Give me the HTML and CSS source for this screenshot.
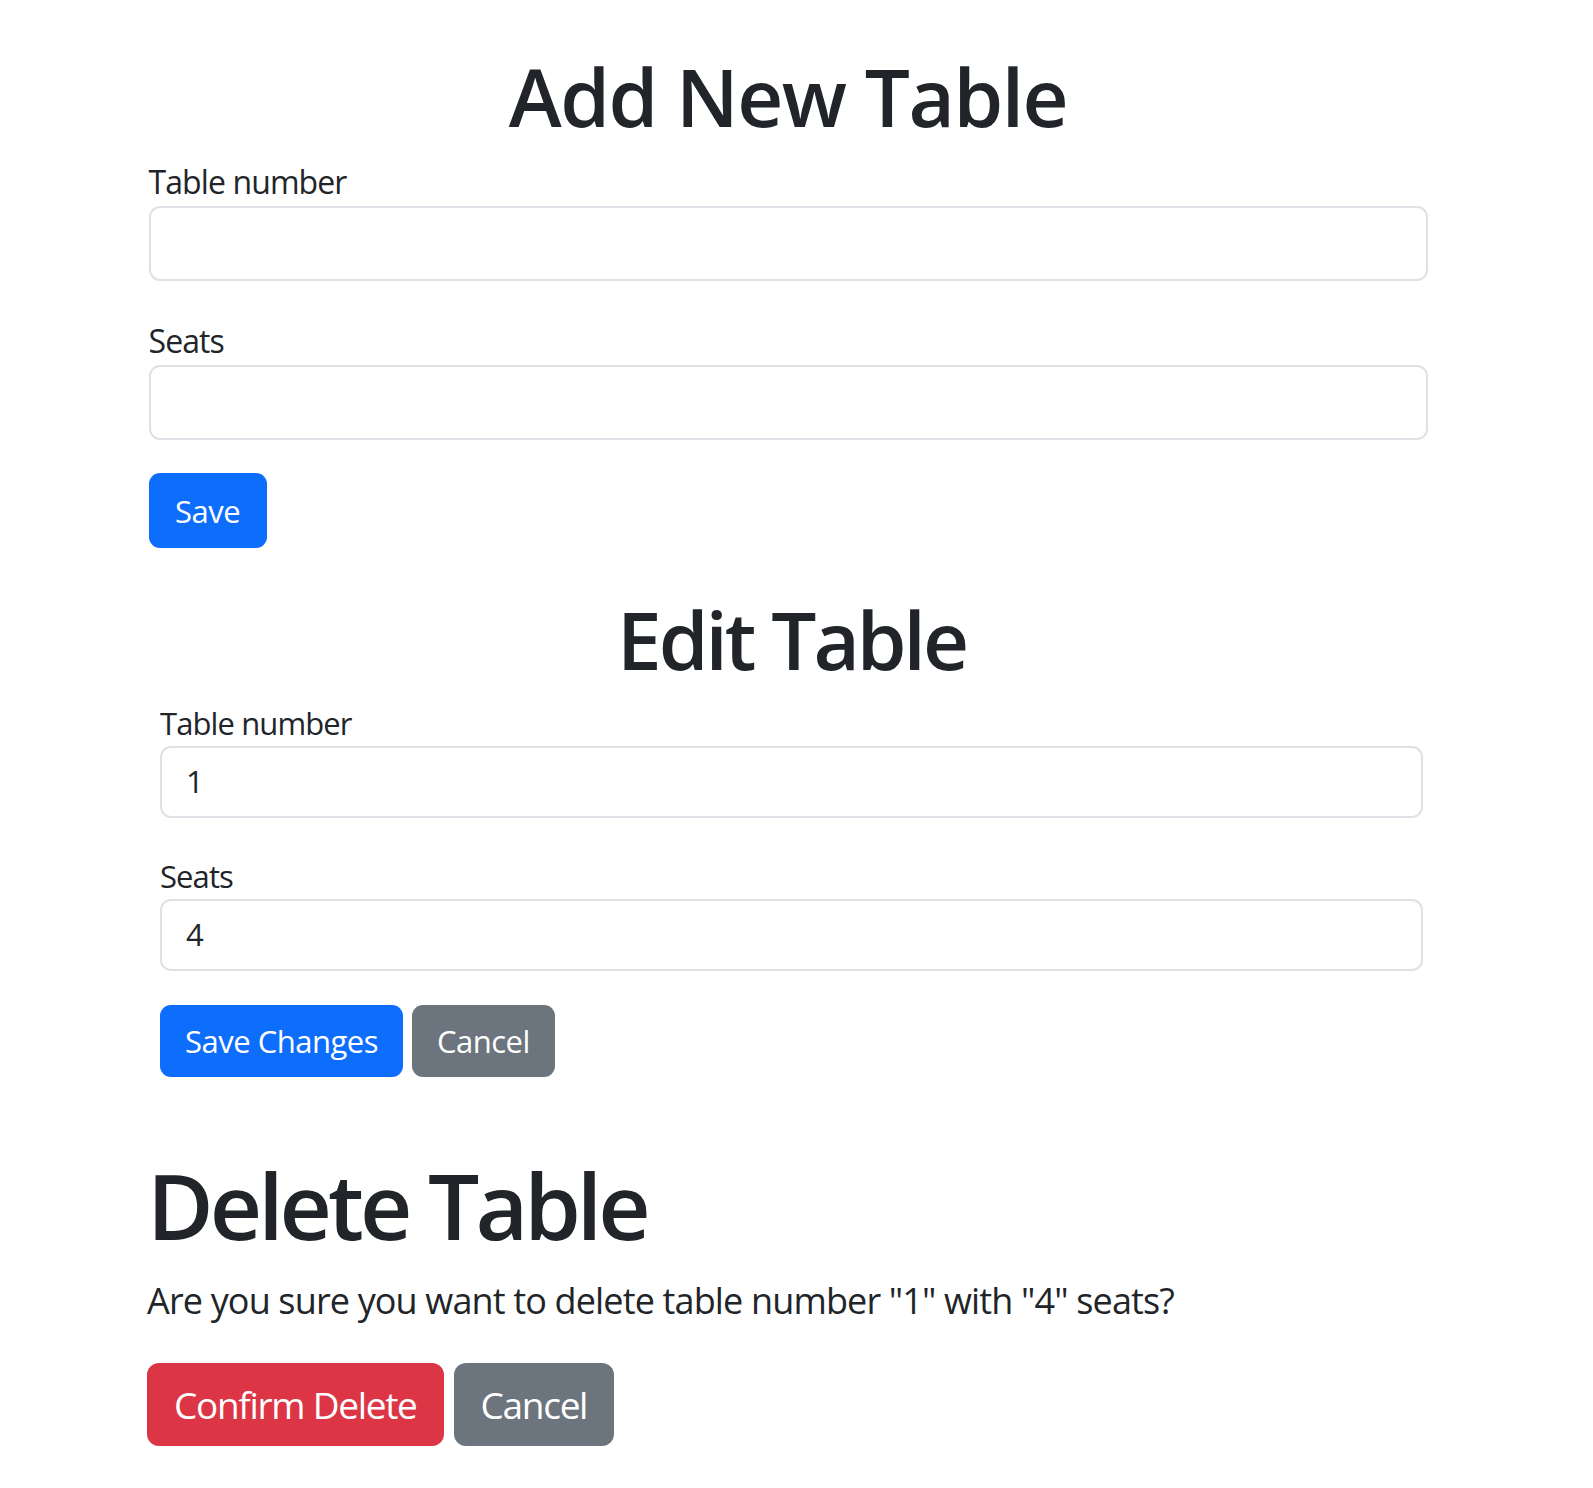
FILE: index.html
```html
<!DOCTYPE html>
<html lang="en">
<head>
<meta charset="utf-8">
<title>Tables</title>
<link rel="stylesheet" href="styles.css">
</head>
<body>
<div class="page">
  <section class="add">
    <h1 class="title">Add New Table</h1>
    <div class="field first">
      <label class="field-label">Table number</label>
      <div class="input"></div>
    </div>
    <div class="field">
      <label class="field-label">Seats</label>
      <div class="input"></div>
    </div>
    <div class="actions">
      <button class="btn btn-primary">Save</button>
    </div>
  </section>

  <section class="edit">
    <h1 class="title">Edit Table</h1>
    <div class="field first">
      <label class="field-label">Table number</label>
      <div class="input">1</div>
    </div>
    <div class="field">
      <label class="field-label">Seats</label>
      <div class="input">4</div>
    </div>
    <div class="actions">
      <button class="btn btn-primary">Save Changes</button>
      <button class="btn btn-secondary">Cancel</button>
    </div>
  </section>

  <section class="delete">
    <h1 class="title">Delete Table</h1>
    <p class="lead">Are you sure you want to delete table number "1" with "4" seats?</p>
    <div class="actions">
      <button class="btn btn-danger">Confirm Delete</button>
      <button class="btn btn-secondary">Cancel</button>
    </div>
  </section>
</div>
</body>
</html>
```

FILE: styles.css
```css
* { box-sizing: border-box; }

body {
  margin: 0;
  background: #fff;
  color: #212529;
  font-family: "Open Sans", "Noto Sans", sans-serif;
}

.page {
  width: 1576px;
}

.title {
  margin: 0;
  font-weight: 600;
  color: #212529;
}

.add {
  width: 1279px;
  margin: 0 auto;
  padding-top: 48px;
}

.add .title {
  font-size: 80px;
  line-height: 96px;
  text-align: center;
  letter-spacing: -1.5px;
}

.field-label {
  display: block;
  font-size: 32px;
  line-height: 48px;
  letter-spacing: -0.9px;
}

.add .field { margin-top: 36px; }
.add .field.first { margin-top: 14px; }

.input {
  border: 2px solid #dee2e6;
  border-radius: 11px;
  background: #fff;
  font-size: 31px;
  line-height: 46px;
  padding: 11px 25px;
}

.add .input { height: 75px; }

.actions {
  display: flex;
}

.btn {
  border: 0;
  color: #fff;
  font-family: inherit;
  border-radius: 11px;
  padding: 0;
  letter-spacing: -0.5px;
}

.btn-primary { background: #0d6efd; }
.btn-secondary { background: #6c757d; }
.btn-danger { background: #dc3545; }

.add .actions { margin-top: 33px; }
.add .btn {
  width: 118px;
  height: 75px;
  font-size: 31px;
}

.edit {
  width: 1263px;
  margin-left: 160px;
  margin-top: 43px;
}

.edit .title {
  font-size: 80px;
  line-height: 96px;
  text-align: center;
  letter-spacing: -3px;
}

.edit .field-label {
  font-size: 31px;
  line-height: 45px;
}

.edit .field { margin-top: 36px; }
.edit .field.first { margin-top: 14px; }

.edit .input {
  height: 72px;
  padding: 10px 24px;
}

.edit .actions {
  margin-top: 34px;
  gap: 9px;
}

.edit .btn {
  height: 72px;
  font-size: 31px;
  padding: 0 25px;
}

.delete {
  width: 1279px;
  margin-left: 147px;
  margin-top: 74px;
}

.delete .title {
  font-size: 91px;
  line-height: 109px;
  letter-spacing: -4px;
}

.lead {
  margin: 12px 0 0;
  font-size: 36px;
  line-height: 58px;
  letter-spacing: -0.85px;
}

.delete .actions {
  margin-top: 33px;
  gap: 10px;
}

.delete .btn {
  height: 83px;
  font-size: 37px;
  padding: 0 27px;
  border-radius: 12px;
  letter-spacing: -1.3px;
}
```
